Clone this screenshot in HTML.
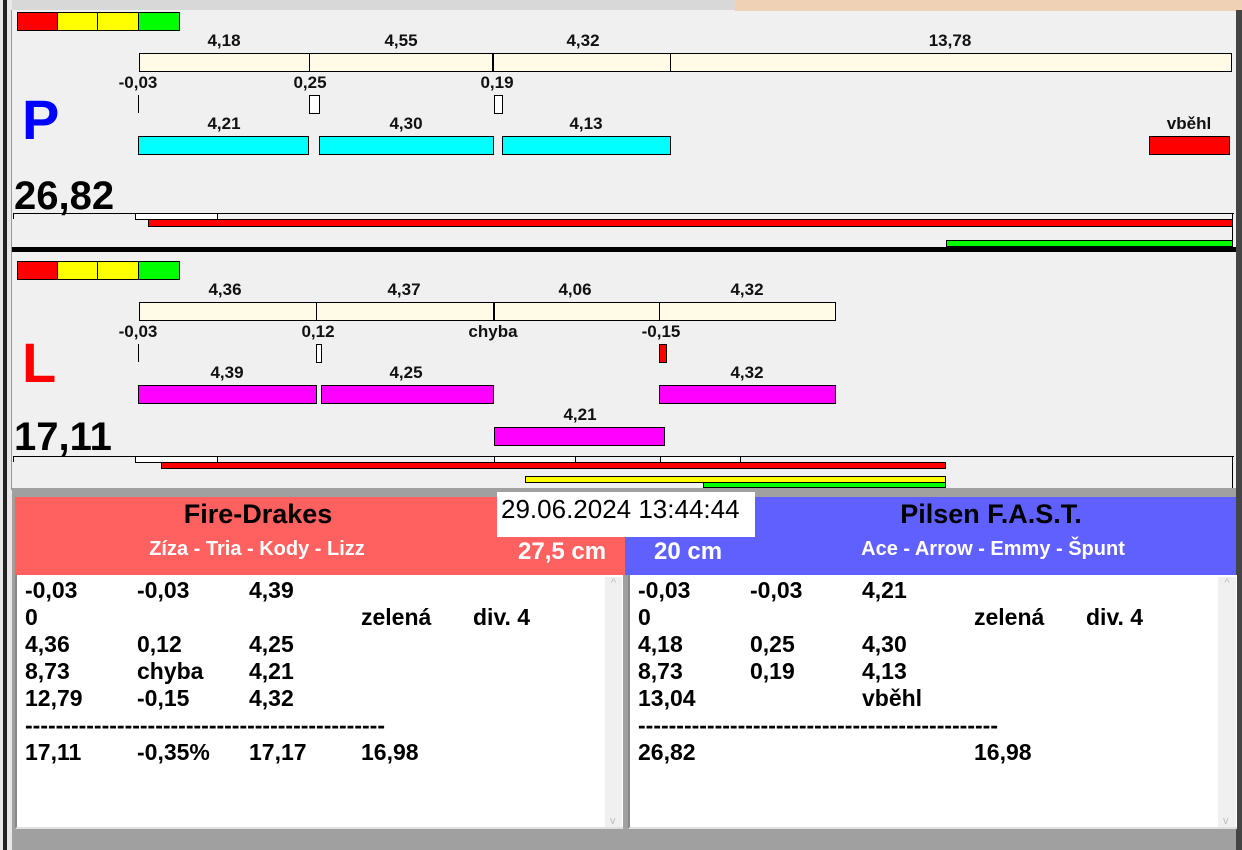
<!DOCTYPE html>
<html><head><meta charset="utf-8"><style>
*{margin:0;padding:0;box-sizing:border-box}
body{width:1242px;height:850px;position:relative;background:#f0f0f0;font-family:"Liberation Sans",Arial,sans-serif;overflow:hidden}
div{position:absolute}
.b{border:1px solid #000}
.t{font-weight:bold;font-size:17px;line-height:17px;transform:translateX(-50%);white-space:nowrap;color:#111}
.c{background:#fffbe6}
.cy{background:#00ffff}
.mg{background:#ff00ff}
.r{background:#ff0000}
.y{background:#ffff00}
.g{background:#00ff00}
.w{background:#fff}
.ls{font-weight:bold;font-size:23px;line-height:27px;color:#000;white-space:pre}
</style></head><body>
<div style="left:0;top:0;width:1242px;height:10px;background:#d8d8d8"></div>
<div style="left:735px;top:0;width:507px;height:11px;background:#efd2b6"></div>
<div style="left:0;top:0;width:12px;height:850px;background:#e8e8e8"></div>
<div style="left:3px;top:0;width:4px;height:850px;background:#222"></div>
<div style="left:11px;top:10px;width:1px;height:480px;background:#999"></div>
<div style="left:1236px;top:10px;width:6px;height:840px;background:#444"></div>

<div class="b r" style="left:17px;top:12px;width:41px;height:19px"></div>
<div class="b y" style="left:57px;top:12px;width:41px;height:19px"></div>
<div class="b y" style="left:97px;top:12px;width:42px;height:19px"></div>
<div class="b g" style="left:138px;top:12px;width:42px;height:19px"></div>
<div class="t" style="left:224px;top:32px">4,18</div>
<div class="t" style="left:401px;top:32px">4,55</div>
<div class="t" style="left:583px;top:32px">4,32</div>
<div class="t" style="left:950px;top:32px">13,78</div>
<div class="b c" style="left:139px;top:53px;width:1093px;height:19px"></div>
<div style="left:309px;top:53px;width:1px;height:19px;background:#000"></div>
<div style="left:492px;top:53px;width:2px;height:19px;background:#000"></div>
<div style="left:670px;top:53px;width:1px;height:19px;background:#000"></div>
<div class="t" style="left:138px;top:74px">-0,03</div>
<div class="t" style="left:310px;top:74px">0,25</div>
<div class="t" style="left:497px;top:74px">0,19</div>
<div style="left:138px;top:95px;width:1px;height:18px;background:#000"></div>
<div class="b w" style="left:309px;top:95px;width:11px;height:19px"></div>
<div class="b w" style="left:494px;top:95px;width:9px;height:19px"></div>
<div class="t" style="left:224px;top:115px">4,21</div>
<div class="t" style="left:406px;top:115px">4,30</div>
<div class="t" style="left:586px;top:115px">4,13</div>
<div class="t" style="left:1189px;top:115px">vběhl</div>
<div class="b cy" style="left:138px;top:136px;width:171px;height:19px"></div>
<div class="b cy" style="left:319px;top:136px;width:175px;height:19px"></div>
<div class="b cy" style="left:502px;top:136px;width:169px;height:19px"></div>
<div class="b r" style="left:1149px;top:136px;width:81px;height:19px"></div>
<div style="left:22px;top:90px;font-weight:bold;font-size:56px;line-height:60px;color:#0000ff">P</div>
<div style="left:14px;top:174px;font-weight:bold;font-size:40px;line-height:44px;color:#000">26,82</div>
<div style="left:13px;top:213px;width:1221px;height:1px;background:#000"></div>
<div style="left:13px;top:213px;width:1px;height:6px;background:#000"></div>
<div style="left:1232px;top:213px;width:1px;height:35px;background:#000"></div>
<div class="b w" style="left:135px;top:213px;width:83px;height:7px"></div>
<div class="b r" style="left:148px;top:219px;width:1085px;height:8px"></div>
<div class="b g" style="left:946px;top:240px;width:287px;height:7px"></div>
<div style="left:12px;top:247px;width:1224px;height:5px;background:#000"></div>

<div class="b r" style="left:17px;top:261px;width:41px;height:19px"></div>
<div class="b y" style="left:57px;top:261px;width:41px;height:19px"></div>
<div class="b y" style="left:97px;top:261px;width:42px;height:19px"></div>
<div class="b g" style="left:138px;top:261px;width:42px;height:19px"></div>
<div class="t" style="left:225px;top:281px">4,36</div>
<div class="t" style="left:404px;top:281px">4,37</div>
<div class="t" style="left:575px;top:281px">4,06</div>
<div class="t" style="left:747px;top:281px">4,32</div>
<div class="b c" style="left:139px;top:302px;width:697px;height:19px"></div>
<div style="left:316px;top:302px;width:1px;height:19px;background:#000"></div>
<div style="left:493px;top:302px;width:2px;height:19px;background:#000"></div>
<div style="left:659px;top:302px;width:1px;height:19px;background:#000"></div>
<div class="t" style="left:138px;top:323px">-0,03</div>
<div class="t" style="left:318px;top:323px">0,12</div>
<div class="t" style="left:493px;top:323px">chyba</div>
<div class="t" style="left:661px;top:323px">-0,15</div>
<div style="left:138px;top:344px;width:1px;height:18px;background:#000"></div>
<div class="b w" style="left:316px;top:344px;width:6px;height:19px"></div>
<div class="b r" style="left:659px;top:344px;width:8px;height:19px"></div>
<div class="t" style="left:227px;top:364px">4,39</div>
<div class="t" style="left:406px;top:364px">4,25</div>
<div class="t" style="left:747px;top:364px">4,32</div>
<div class="b mg" style="left:138px;top:385px;width:179px;height:19px"></div>
<div class="b mg" style="left:321px;top:385px;width:173px;height:19px"></div>
<div class="b mg" style="left:659px;top:385px;width:177px;height:19px"></div>
<div class="t" style="left:580px;top:406px">4,21</div>
<div class="b mg" style="left:494px;top:427px;width:171px;height:19px"></div>
<div style="left:22px;top:333px;font-weight:bold;font-size:56px;line-height:60px;color:#ff0000">L</div>
<div style="left:14px;top:415px;font-weight:bold;font-size:40px;line-height:44px;color:#000">17,11</div>
<div style="left:13px;top:456px;width:1221px;height:1px;background:#000"></div>
<div style="left:13px;top:456px;width:1px;height:6px;background:#000"></div>
<div style="left:1232px;top:456px;width:1px;height:33px;background:#000"></div>
<div class="b w" style="left:135px;top:456px;width:83px;height:7px"></div>
<div class="b w" style="left:494px;top:456px;width:82px;height:7px"></div>
<div class="b w" style="left:660px;top:456px;width:81px;height:7px"></div>
<div class="b r" style="left:161px;top:462px;width:785px;height:7px"></div>
<div class="b y" style="left:525px;top:476px;width:421px;height:7px"></div>
<div class="b g" style="left:703px;top:482px;width:243px;height:6px"></div>

<div style="left:12px;top:488px;width:1224px;height:362px;background:#a0a0a0"></div>
<div style="left:15px;top:497px;width:610px;height:78px;background:#ff6060"></div>
<div style="left:625px;top:497px;width:611px;height:78px;background:#6060ff"></div>
<div style="left:497px;top:492px;width:258px;height:45px;background:#fff"></div>
<div style="left:501px;top:494px;font-size:26px;line-height:30px;color:#000;white-space:nowrap">29.06.2024 13:44:44</div>
<div class="t" style="left:258px;top:500px;font-size:27px;line-height:28px;color:#000">Fire-Drakes</div>
<div class="t" style="left:257px;top:538px;font-size:20px;line-height:22px;color:#fff">Zíza - Tria - Kody - Lizz</div>
<div style="left:518px;top:539px;font-weight:bold;font-size:24px;line-height:26px;color:#fff">27,5 cm</div>
<div style="left:654px;top:539px;font-weight:bold;font-size:24px;line-height:26px;color:#fff">20 cm</div>
<div class="t" style="left:991px;top:500px;font-size:27px;line-height:28px;color:#000">Pilsen F.A.S.T.</div>
<div class="t" style="left:993px;top:538px;font-size:20px;line-height:22px;color:#fff">Ace - Arrow - Emmy - Špunt</div>

<div style="left:15px;top:575px;width:608px;height:254px;background:#fff;border-left:2px solid #888;border-bottom:2px solid #e0e0e0"></div>
<div style="left:605px;top:577px;width:17px;height:250px;background:#f0f0f0;color:#bbb;font-size:11px;text-align:center">^<div style="bottom:0;left:5px">v</div></div>
<div style="left:628px;top:575px;width:609px;height:254px;background:#fff;border-left:2px solid #888;border-bottom:2px solid #e0e0e0"></div>
<div style="left:1218px;top:577px;width:18px;height:250px;background:#f0f0f0;color:#bbb;font-size:11px;text-align:center">^<div style="bottom:0;left:5px">v</div></div>

<div class="ls" style="left:25px;top:577px">-0,03</div><div class="ls" style="left:137px;top:577px">-0,03</div><div class="ls" style="left:249px;top:577px">4,39</div>
<div class="ls" style="left:25px;top:604px">0</div><div class="ls" style="left:361px;top:604px">zelená</div><div class="ls" style="left:473px;top:604px">div. 4</div>
<div class="ls" style="left:25px;top:631px">4,36</div><div class="ls" style="left:137px;top:631px">0,12</div><div class="ls" style="left:249px;top:631px">4,25</div>
<div class="ls" style="left:25px;top:658px">8,73</div><div class="ls" style="left:137px;top:658px">chyba</div><div class="ls" style="left:249px;top:658px">4,21</div>
<div class="ls" style="left:25px;top:685px">12,79</div><div class="ls" style="left:137px;top:685px">-0,15</div><div class="ls" style="left:249px;top:685px">4,32</div>
<div class="ls" style="left:25px;top:712px;width:360px;overflow:hidden">------------------------------------------------------</div>
<div class="ls" style="left:25px;top:739px">17,11</div><div class="ls" style="left:137px;top:739px">-0,35%</div><div class="ls" style="left:249px;top:739px">17,17</div><div class="ls" style="left:361px;top:739px">16,98</div>

<div class="ls" style="left:638px;top:577px">-0,03</div><div class="ls" style="left:750px;top:577px">-0,03</div><div class="ls" style="left:862px;top:577px">4,21</div>
<div class="ls" style="left:638px;top:604px">0</div><div class="ls" style="left:974px;top:604px">zelená</div><div class="ls" style="left:1086px;top:604px">div. 4</div>
<div class="ls" style="left:638px;top:631px">4,18</div><div class="ls" style="left:750px;top:631px">0,25</div><div class="ls" style="left:862px;top:631px">4,30</div>
<div class="ls" style="left:638px;top:658px">8,73</div><div class="ls" style="left:750px;top:658px">0,19</div><div class="ls" style="left:862px;top:658px">4,13</div>
<div class="ls" style="left:638px;top:685px">13,04</div><div class="ls" style="left:862px;top:685px">vběhl</div>
<div class="ls" style="left:638px;top:712px;width:360px;overflow:hidden">------------------------------------------------------</div>
<div class="ls" style="left:638px;top:739px">26,82</div><div class="ls" style="left:974px;top:739px">16,98</div>
</body></html>
